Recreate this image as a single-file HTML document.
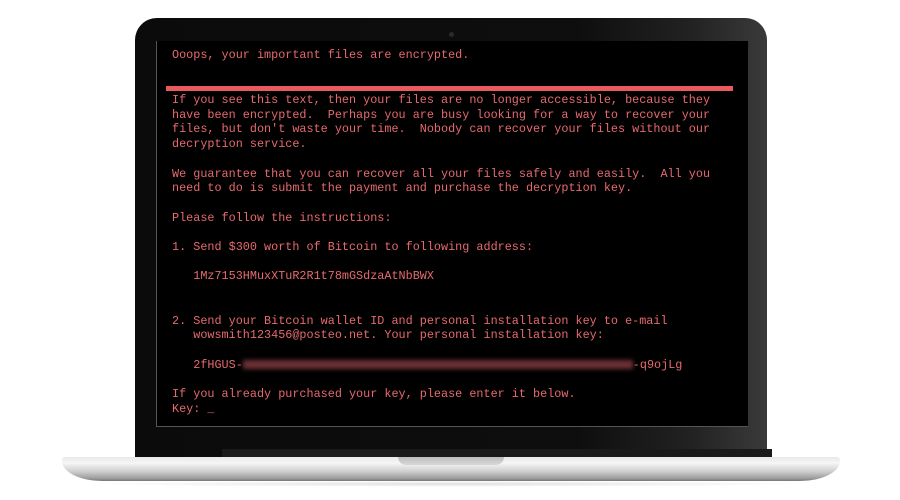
<!DOCTYPE html>
<html><head><meta charset="utf-8"><style>
html,body{margin:0;padding:0;background:#fff;width:900px;height:500px;overflow:hidden;position:relative}
.bezel{position:absolute;left:135px;top:18px;width:632px;height:445px;border-radius:22px 22px 0 0;background:linear-gradient(90deg,#0b0b0b 0%,#0e0e0e 70%,#222 88%,#3a3a3a 100%);}
.cam{position:absolute;left:449px;top:32px;width:5px;height:5px;border-radius:50%;background:#2a2a2a}
.screen{position:absolute;left:156px;top:41px;width:591px;height:385px;background:#000;border-left:1px solid #555;border-bottom:1px solid #555;border-right:1px solid #333}
.hinge{position:absolute;left:222px;top:449px;width:550px;height:8px;background:#1a1a1a}
.base{position:absolute;left:62px;top:457px;width:778px;height:24px;border-radius:3px 3px 40px 40px/3px 3px 20px 20px;background:linear-gradient(180deg,#e8e8e8 0%,#f6f6f6 25%,#cfcfcf 60%,#9a9a9a 90%,#777 100%)}
.notch{position:absolute;left:398px;top:457px;width:106px;height:8px;border-radius:0 0 8px 8px;background:linear-gradient(180deg,#bdbdbd,#d8d8d8)}
.shadow{position:absolute;left:80px;top:481px;width:740px;height:6px;background:radial-gradient(ellipse at center,rgba(0,0,0,.12),rgba(0,0,0,0) 70%)}
.t{position:absolute;left:172px;font-family:"Liberation Mono",monospace;font-size:11.8px;color:#e66a6e;white-space:pre;line-height:14.7px}
.bar{position:absolute;left:166px;top:86px;width:567px;height:5px;background:#e85a5e}
.blur{display:inline-block;height:9px;background:#6a3034;filter:blur(2px);vertical-align:middle}
</style></head><body>
<div class="bezel"></div>
<div class="cam"></div>
<div class="screen"></div>
<div class="hinge"></div>
<div class="base"></div>
<div class="notch"></div>
<div class="shadow"></div>
<div class="t" style="top:48px">Ooops, your important files are encrypted.</div>
<div class="bar"></div>
<div class="t" style="top:93px">If you see this text, then your files are no longer accessible, because they
have been encrypted.  Perhaps you are busy looking for a way to recover your
files, but don't waste your time.  Nobody can recover your files without our
decryption service.

We guarantee that you can recover all your files safely and easily.  All you
need to do is submit the payment and purchase the decryption key.

Please follow the instructions:

1. Send $300 worth of Bitcoin to following address:

   1Mz7153HMuxXTuR2R1t78mGSdzaAtNbBWX


2. Send your Bitcoin wallet ID and personal installation key to e-mail
   wowsmith123456@posteo.net. Your personal installation key:

   2fHGUS-<span class="blur" style="width:390px"></span>-q9ojLg

If you already purchased your key, please enter it below.
Key: _</div>
</body></html>
